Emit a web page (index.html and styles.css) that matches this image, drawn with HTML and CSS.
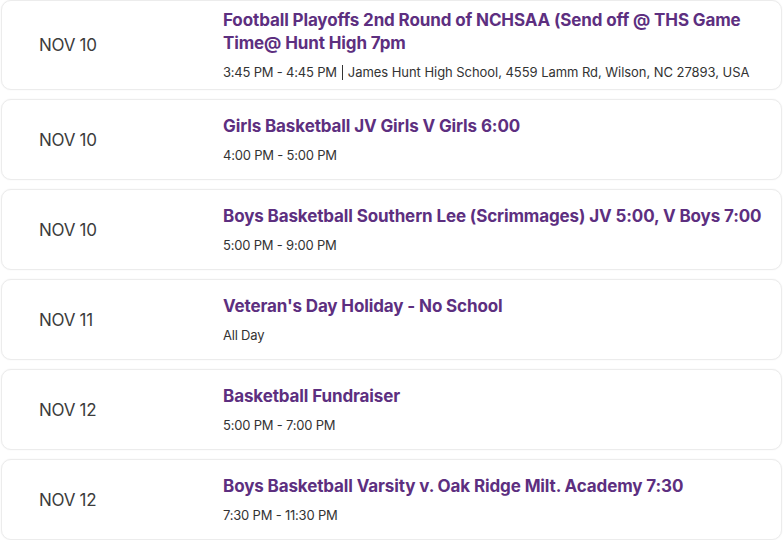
FILE: index.html
```html
<!DOCTYPE html>
<html>
<head>
<meta charset="utf-8">
<link rel="stylesheet" href="styles.css">
</head>
<body>
<div class="list">
  <div class="card">
    <div class="date">NOV 10</div>
    <div class="info">
      <div class="title">Football Playoffs 2nd Round of NCHSAA (Send off @ THS Game Time@ Hunt High 7pm</div>
      <div class="meta"><span>3:45 PM - 4:45 PM</span><span class="sep"></span><span class="addr">James Hunt High School, 4559 Lamm Rd, Wilson, NC 27893, USA</span></div>
    </div>
  </div>
  <div class="card">
    <div class="date">NOV 10</div>
    <div class="info">
      <div class="title">Girls Basketball JV Girls V Girls 6:00</div>
      <div class="meta"><span>4:00 PM - 5:00 PM</span></div>
    </div>
  </div>
  <div class="card">
    <div class="date">NOV 10</div>
    <div class="info">
      <div class="title">Boys Basketball Southern Lee (Scrimmages) JV 5:00, V Boys 7:00</div>
      <div class="meta"><span>5:00 PM - 9:00 PM</span></div>
    </div>
  </div>
  <div class="card">
    <div class="date">NOV 11</div>
    <div class="info">
      <div class="title">Veteran's Day Holiday - No School</div>
      <div class="meta"><span>All Day</span></div>
    </div>
  </div>
  <div class="card">
    <div class="date">NOV 12</div>
    <div class="info">
      <div class="title">Basketball Fundraiser</div>
      <div class="meta"><span>5:00 PM - 7:00 PM</span></div>
    </div>
  </div>
  <div class="card">
    <div class="date">NOV 12</div>
    <div class="info">
      <div class="title">Boys Basketball Varsity v. Oak Ridge Milt. Academy 7:30</div>
      <div class="meta"><span>7:30 PM - 11:30 PM</span></div>
    </div>
  </div>
</div>
</body>
</html>
```
FILE: styles.css
```css
html, body {
  margin: 0;
  padding: 0;
  background: #ffffff;
  overflow: hidden;
}
body {
  font-family: Inter, "Liberation Sans", Arial, sans-serif;
}
.list {
  padding: 0 1px;
  display: flex;
  flex-direction: column;
  gap: 9px;
}
.card {
  box-sizing: border-box;
  min-height: 81px;
  display: grid;
  grid-template-columns: 184px 1fr;
  align-items: center;
  padding: 8px 10px 8px 37px;
  border: 1px solid #ececec;
  border-radius: 10px;
  box-shadow: 0 0 2px rgba(0,0,0,0.06);
  background: #fff;
}
.date {
  font-size: 17px;
  color: #3c3c3c;
  letter-spacing: -0.3px;
}
.info {
  display: flex;
  flex-direction: column;
  gap: 8px;
}
.title {
  font-size: 17px;
  line-height: 23px;
  font-weight: 700;
  color: #5d2f80;
  letter-spacing: -0.12px;
}
.meta {
  display: flex;
  align-items: center;
  font-size: 13px;
  line-height: 18px;
  color: #333;
  letter-spacing: -0.2px;
}
.addr {
  letter-spacing: -0.05px;
}
.sep {
  width: 1px;
  height: 15px;
  background: #333;
  margin: 0 5px;
}
```
